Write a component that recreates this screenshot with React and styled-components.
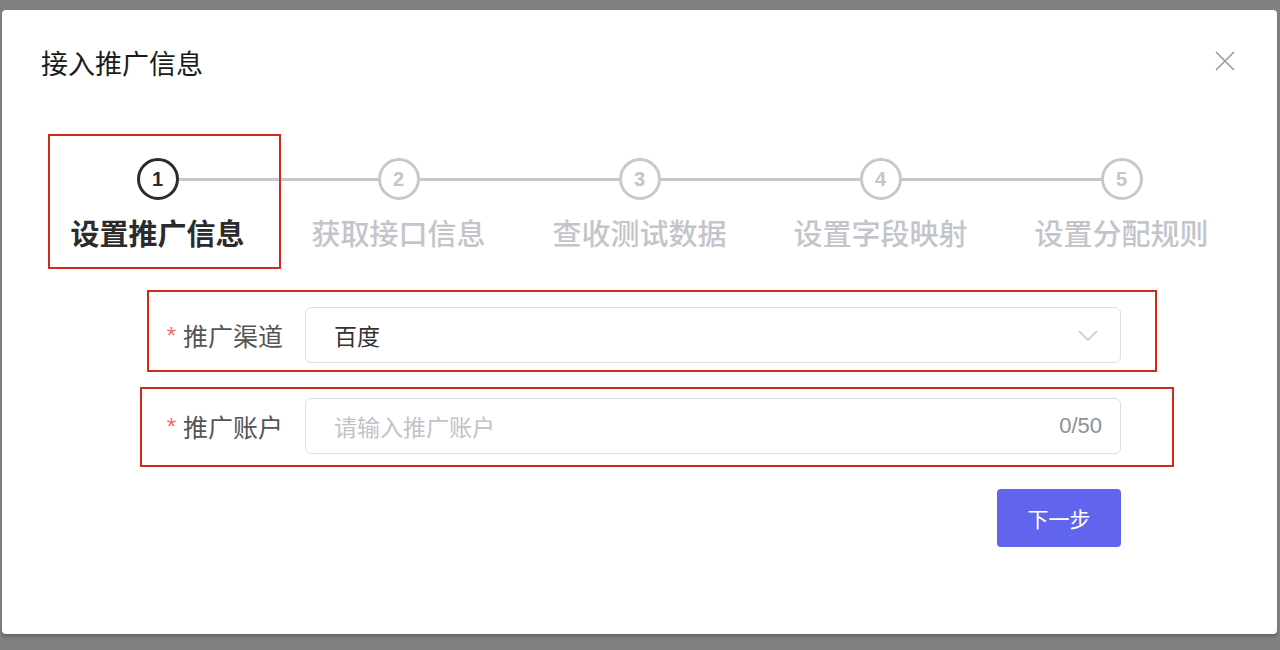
import React from 'react';
import styled, { createGlobalStyle } from 'styled-components';

const GlobalStyle = createGlobalStyle`
  html, body {
    margin: 0;
    padding: 0;
    background: #808080;
  }
  * {
    box-sizing: border-box;
  }
`;

const FONT = `"Liberation Sans", "Noto Sans CJK SC", sans-serif`;

const Backdrop = styled.div`
  width: 1280px;
  height: 650px;
  padding: 10px 3px 0 2px;
  background: #808080;
`;

const Modal = styled.div`
  width: 1275px;
  height: 624px;
  background: #fff;
  border-radius: 4px;
  box-shadow: 0 3px 3px rgba(0, 0, 0, 0.18);
  display: flex;
  flex-direction: column;
  font-family: ${FONT};
`;

const Header = styled.div`
  display: flex;
  align-items: center;
  justify-content: space-between;
  padding: 40px 40px 0 39px;
`;

const Title = styled.h2`
  margin: 0;
  font-size: 27px;
  line-height: 30px;
  font-weight: 400;
  color: #1a1a1a;
`;

const Close = styled.button`
  width: 24px;
  height: 24px;
  padding: 0;
  border: none;
  background: none;
  display: flex;
  align-items: center;
  justify-content: center;
  margin-top: -9px;
`;

const Steps = styled.div`
  position: relative;
  display: flex;
  margin: 78px 0 0 35px;
  width: 1205px;
`;

const Step = styled.div`
  flex: 1;
  display: flex;
  flex-direction: column;
  align-items: center;
`;

const StepHead = styled.div`
  display: flex;
  align-items: center;
  width: 100%;
  height: 42px;
`;

const Line = styled.div`
  flex: 1;
  height: 3px;
  background: ${(p) => (p.$blank ? 'transparent' : '#c6c8cd')};
`;

const Circle = styled.div`
  width: 42px;
  height: 42px;
  border-radius: 50%;
  border: 3px solid ${(p) => (p.$active ? '#2b2b2b' : '#c6c8cd')};
  color: ${(p) => (p.$active ? '#2b2b2b' : '#c3c5ca')};
  display: flex;
  align-items: center;
  justify-content: center;
  font-size: 20px;
  font-weight: 700;
`;

const StepLabel = styled.div`
  margin-top: 17px;
  font-size: 29px;
  line-height: 36px;
  font-weight: ${(p) => (p.$active ? 700 : 500)};
  color: ${(p) => (p.$active ? '#2b2b2b' : '#c3c5ca')};
`;

const Mark = styled.div`
  position: absolute;
  border: 2px solid #cf2a1b;
  pointer-events: none;
`;

const Form = styled.div`
  position: relative;
  display: flex;
  flex-direction: column;
  gap: 35px;
  margin-top: 54px;
  padding-left: 158px;
  width: 1119px;
`;

const Field = styled.div`
  display: flex;
  align-items: center;
`;

const Label = styled.label`
  width: 145px;
  padding-right: 22px;
  text-align: right;
  font-size: 25px;
  color: #555;
  white-space: nowrap;
`;

const Star = styled.span`
  color: #f56c6c;
  font-size: 24px;
  margin-right: 7px;
  vertical-align: 2px;
`;

const Control = styled.div`
  flex: 1;
  height: ${(p) => p.$h}px;
  border: 1.5px solid #dcdee3;
  border-radius: 6px;
  display: flex;
  align-items: center;
  justify-content: space-between;
  padding: 0 22px 0 28px;
`;

const Value = styled.span`
  font-size: 23px;
  color: #333;
`;

const Placeholder = styled.span`
  font-size: 23px;
  color: #c0c3c9;
`;

const Counter = styled.span`
  font-size: 22px;
  color: #8e9096;
  margin-right: -4px;
`;

const Actions = styled.div`
  display: flex;
  justify-content: flex-end;
`;

const NextButton = styled.button`
  width: 124px;
  height: 58px;
  border: none;
  border-radius: 4px;
  background: #6165ed;
  color: #fff;
  font-family: ${FONT};
  font-size: 21px;
`;

const steps = ['设置推广信息', '获取接口信息', '查收测试数据', '设置字段映射', '设置分配规则'];

export default function App() {
  return (
    <>
      <GlobalStyle />
      <Backdrop>
        <Modal>
          <Header>
            <Title>接入推广信息</Title>
            <Close aria-label="关闭">
              <svg width="20" height="20" viewBox="0 0 20 20">
                <path d="M1 1 L19 19 M19 1 L1 19" stroke="#9a9a9a" strokeWidth="1.6" fill="none" />
              </svg>
            </Close>
          </Header>

          <Steps>
            {steps.map((s, i) => (
              <Step key={s}>
                <StepHead>
                  <Line $blank={i === 0} />
                  <Circle $active={i === 0}>{i + 1}</Circle>
                  <Line $blank={i === steps.length - 1} />
                </StepHead>
                <StepLabel $active={i === 0}>{s}</StepLabel>
              </Step>
            ))}
            <Mark style={{ left: 11, top: -24, width: 233, height: 135 }} />
          </Steps>

          <Form>
            <Field>
              <Label><Star>*</Star>推广渠道</Label>
              <Control $h={56}>
                <Value>百度</Value>
                <svg width="20" height="11" viewBox="0 0 20 11">
                  <path d="M1 1 L10 10 L19 1" stroke="#bfc2c8" strokeWidth="1.4" fill="none" />
                </svg>
              </Control>
            </Field>
            <Field>
              <Label><Star>*</Star>推广账户</Label>
              <Control $h={56}>
                <Placeholder>请输入推广账户</Placeholder>
                <Counter>0/50</Counter>
              </Control>
            </Field>
            <Actions>
              <NextButton>下一步</NextButton>
            </Actions>
            <Mark style={{ left: 145, top: -17, width: 1010, height: 82 }} />
            <Mark style={{ left: 138, top: 80, width: 1034, height: 80 }} />
          </Form>
        </Modal>
      </Backdrop>
    </>
  );
}
